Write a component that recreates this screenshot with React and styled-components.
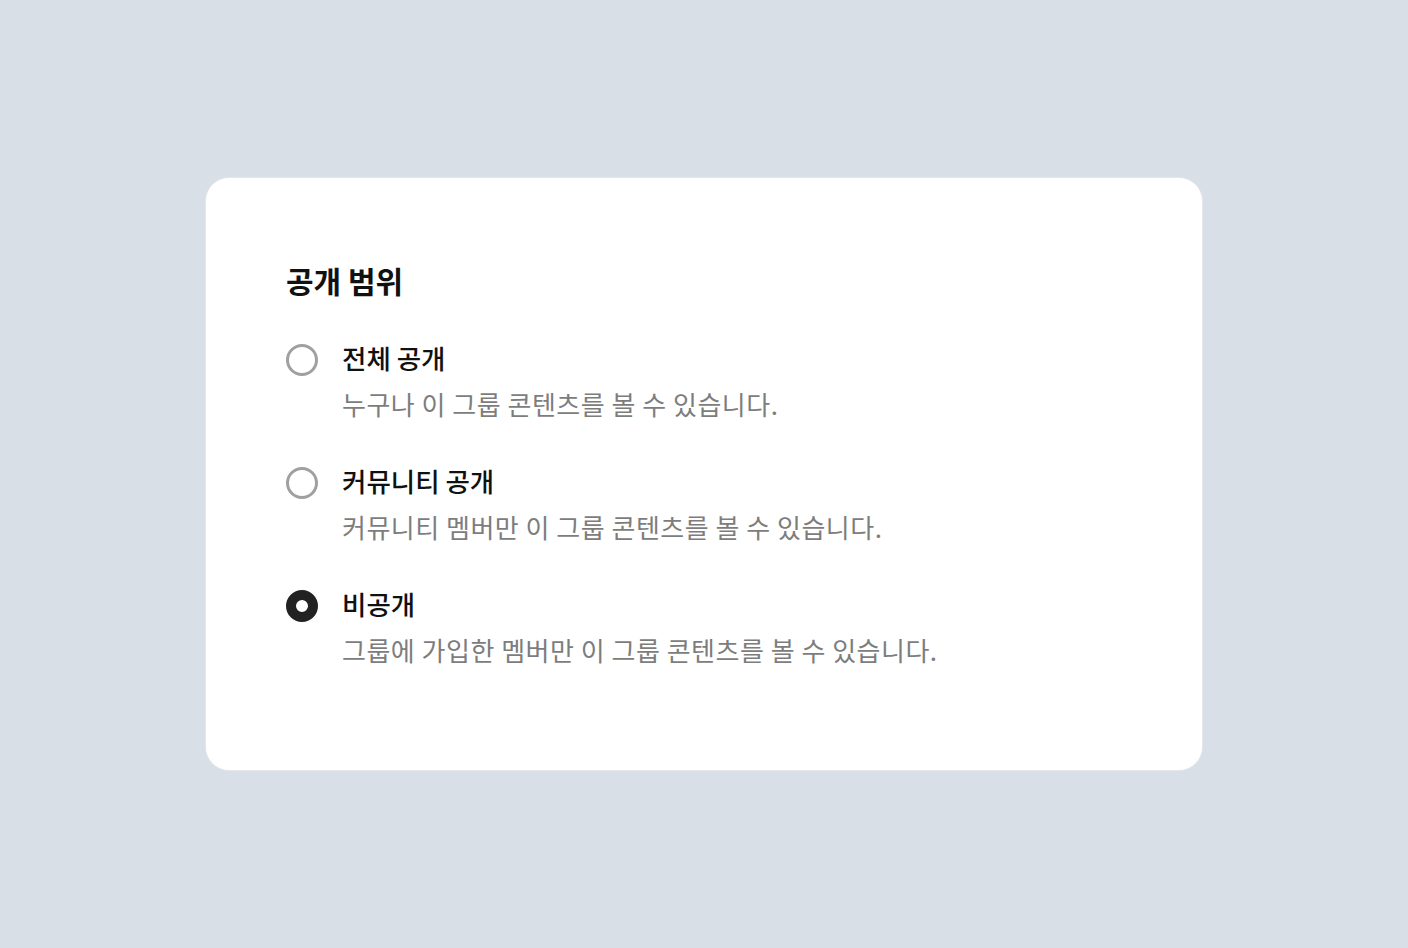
import { useState } from "react";
import styled, { createGlobalStyle } from "styled-components";

const GlobalStyle = createGlobalStyle`
  html, body {
    margin: 0;
    padding: 0;
    background: #d9dfe6;
  }
  body {
    font-family: "Noto Sans CJK KR", "Noto Sans", sans-serif;
  }
`;

const OPTIONS = [
  {
    id: "public",
    label: "전체 공개",
    desc: "누구나 이 그룹 콘텐츠를 볼 수 있습니다.",
  },
  {
    id: "community",
    label: "커뮤니티 공개",
    desc: "커뮤니티 멤버만 이 그룹 콘텐츠를 볼 수 있습니다.",
  },
  {
    id: "private",
    label: "비공개",
    desc: "그룹에 가입한 멤버만 이 그룹 콘텐츠를 볼 수 있습니다.",
  },
];

const App = () => {
  const [selected, setSelected] = useState("private");

  return (
    <>
      <GlobalStyle />
      <Page>
        <Card>
          <Title>공개 범위</Title>
          <List>
            {OPTIONS.map(({ id, label, desc }) => (
              <Option key={id} onClick={() => setSelected(id)}>
                <Radio $checked={selected === id} />
                <Texts>
                  <Label>{label}</Label>
                  <Desc>{desc}</Desc>
                </Texts>
              </Option>
            ))}
          </List>
        </Card>
      </Page>
    </>
  );
};

const Page = styled.div`
  width: 1408px;
  height: 948px;
  display: flex;
  align-items: center;
  justify-content: center;
`;
const Card = styled.div`
  box-sizing: border-box;
  width: 998px;
  height: 594px;
  background: #fff;
  border: 1px solid #e3e7ec;
  border-radius: 24px;
  padding: 82px 80px;
  display: flex;
  flex-direction: column;
`;
const Title = styled.h2`
  margin: 0;
  font-size: 30px;
  font-weight: 700;
  color: #111;
  line-height: 40px;
`;
const List = styled.div`
  margin-top: 40px;
  display: flex;
  flex-direction: column;
  gap: 41px;
`;
const Option = styled.label`
  display: flex;
  gap: 24px;
  cursor: pointer;
`;
const Radio = styled.span`
  box-sizing: border-box;
  flex: none;
  width: 32px;
  height: 32px;
  margin-top: 4px;
  border-radius: 50%;
  border: ${({ $checked }) => ($checked ? "10px solid #222" : "3px solid #a0a0a0")};
  background: #fff;
`;
const Texts = styled.div`
  display: flex;
  flex-direction: column;
  gap: 10px;
`;
const Label = styled.div`
  font-size: 26.5px;
  font-weight: 500;
  color: #111;
  line-height: 36px;
`;
const Desc = styled.div`
  font-size: 26px;
  letter-spacing: 0.5px;
  color: #7d7d7d;
  line-height: 36px;
`;

export default App;
